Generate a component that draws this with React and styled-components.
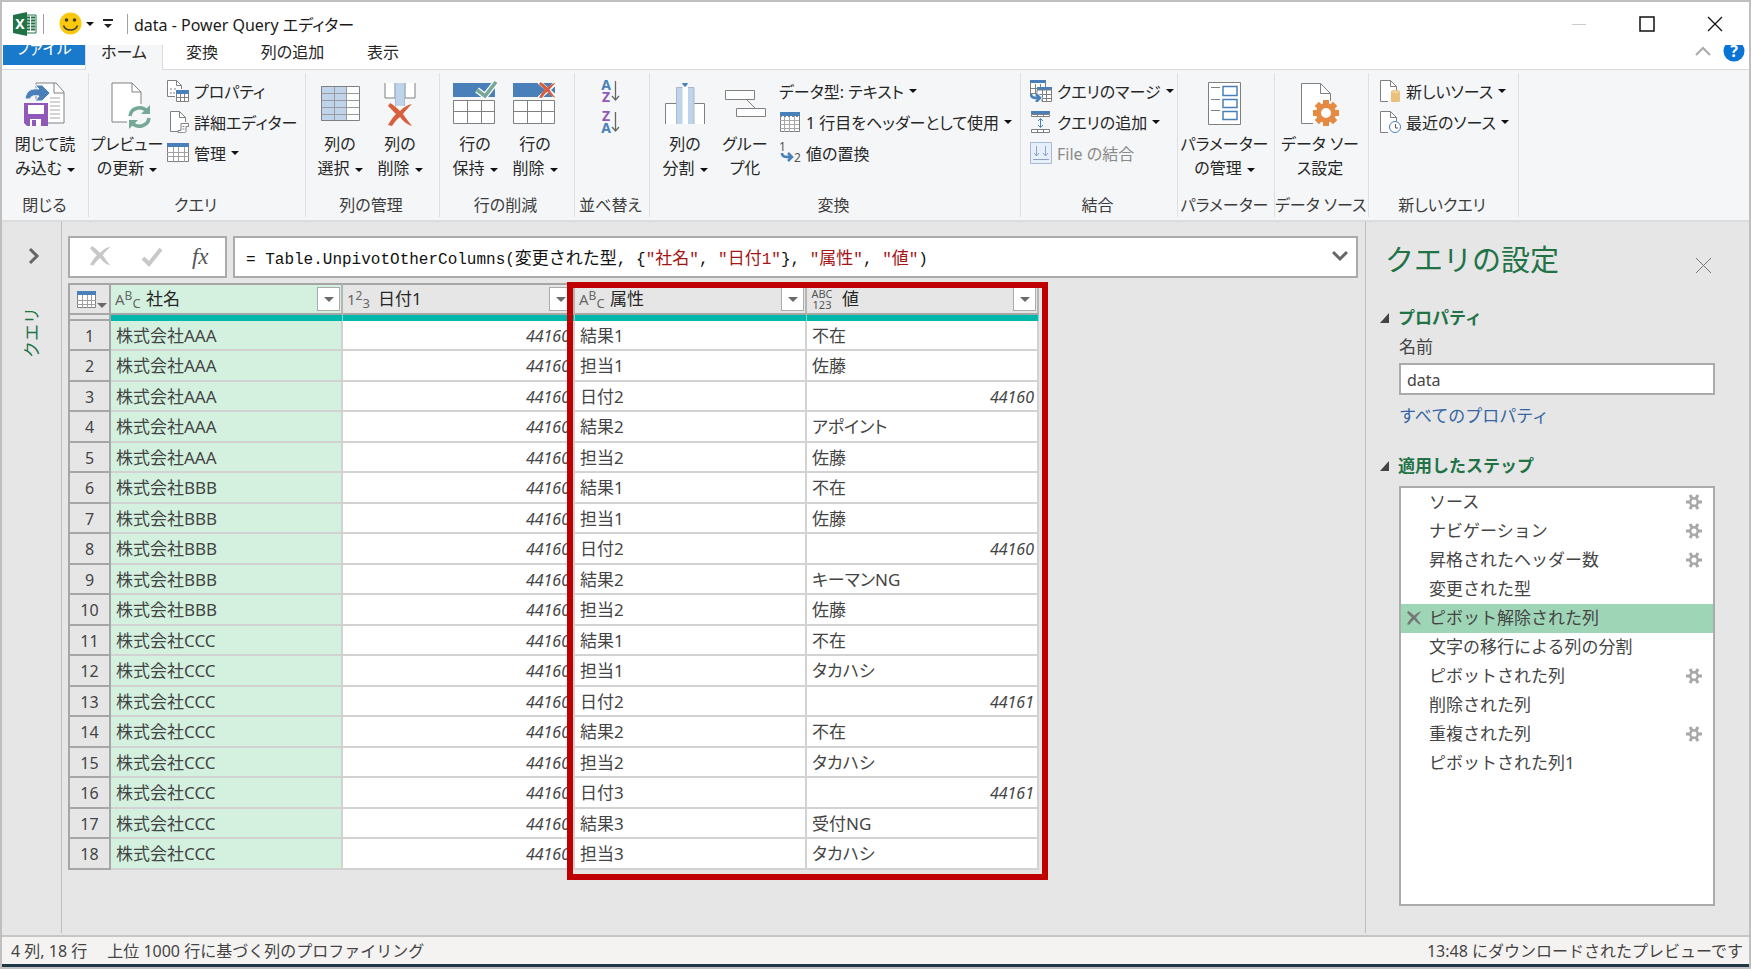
import styled, { createGlobalStyle, css } from "styled-components";

const GlobalStyle = createGlobalStyle`
  * {
    box-sizing: border-box;
  }
  body {
    margin: 0;
    font-family: "Noto Sans", "Noto Sans CJK JP", sans-serif;
    font-size: 17px;
    color: #262626;
  }
  button {
    font: inherit;
    color: inherit;
    background: none;
    border: 0;
    padding: 0;
    cursor: pointer;
  }
  svg {
    display: block;
    flex: none;
  }
`;

const Window = styled.div`
  display: flex;
  flex-direction: column;
  min-height: 100vh;
  border: 2px solid #bfbfbf;
  background: #e6e6e6;
`;

/* title bar */

const TitleBar = styled.header`
  display: flex;
  align-items: center;
  height: 43px;
  padding-left: 11px;
  background: #fff;
`;

const Divider = styled.span`
  width: 1px;
  height: 20px;
  background: #a0a0a0;
`;

const QuickButton = styled.button`
  display: flex;
  align-items: center;
  gap: 4px;
  margin-left: ${(p) => p.$left}px;
`;

const WindowTitle = styled.h1`
  flex: 1;
  margin: 0 0 0 6px;
  font-size: 16px;
  font-weight: 400;
  font-feature-settings: "palt";
  color: #1a1a1a;
`;

const WindowButton = styled.button`
  display: flex;
  align-items: center;
  justify-content: center;
  width: 68px;
  height: 43px;
`;

const Caret = styled.span`
  display: inline-block;
  width: 0;
  height: 0;
  border-left: 4px solid transparent;
  border-right: 4px solid transparent;
  border-top: 4px solid #111;
  vertical-align: middle;
  margin-left: ${(p) => p.$gap || 0}px;
`;

/* ribbon */

const TabRow = styled.nav`
  display: flex;
  align-items: flex-end;
  height: 25px;
  padding-left: 1px;
  overflow: hidden;
  background: linear-gradient(#dadbdc, #dadbdc) bottom / 100% 1px no-repeat #fff;
  font-size: 16px;
  font-feature-settings: "palt";
`;

const Tab = styled.button`
  flex: none;
  width: ${(p) => p.$width || 78}px;
  height: 40px;
  border: 1px solid transparent;
  border-bottom: 0;
  ${(p) =>
    p.$active &&
    css`
      background: #f5f6f7;
      border-color: #dadbdc;
    `}
`;

const FileTab = styled.button`
  width: 82px;
  height: 36px;
  margin-bottom: 5px;
  background: #1979ca;
  color: #fff;
`;

const TabTools = styled.div`
  display: flex;
  align-items: flex-end;
  gap: 12px;
  margin-left: auto;
  padding: 0 4px 8px 0;
`;

const RibbonBar = styled.section`
  display: flex;
  height: 152px;
  padding-left: 2px;
  background: #f5f6f8;
  border-bottom: 2px solid #dcdcdd;
  font-size: 16px;
  font-feature-settings: "palt";
`;

const Group = styled.div`
  display: flex;
  flex-direction: column;
  flex: none;
  width: ${(p) => p.$width}px;
  margin: 3px 0;
  border-right: 1px solid #dfe0e2;
`;

const GroupBody = styled.div`
  display: flex;
  flex: 1;
  padding-top: 2px;
  padding-left: ${(p) => p.$pad || 0}px;
`;

const GroupLabel = styled.div`
  height: 24px;
  padding-right: 3px;
  line-height: 24px;
  text-align: center;
  white-space: nowrap;
  color: #3c3c3c;
`;

const BigButton = styled.button`
  display: flex;
  flex-direction: column;
  align-items: center;
  align-self: flex-start;
  flex: none;
  width: ${(p) => p.$width}px;
  padding-top: 6px;
`;

const BigLine = styled.span`
  display: block;
  line-height: 24px;
  white-space: nowrap;
`;

const BigIcon = styled.span`
  height: 51px;
`;

const SmallList = styled.div`
  display: flex;
  flex-direction: column;
  align-items: flex-start;
  margin-left: ${(p) => p.$left || 0}px;
`;

const SmallButton = styled.button`
  display: flex;
  align-items: center;
  gap: 5px;
  height: 31px;
  white-space: nowrap;
  &:disabled {
    color: #8a8a8a;
  }
`;

/* work area */

const Work = styled.main`
  display: flex;
  flex: 1;
`;

const QueryPane = styled.aside`
  display: flex;
  flex-direction: column;
  align-items: center;
  width: 60px;
  margin-bottom: 2px;
  padding: 25px 0 0 4px;
  border-right: 1px solid #bdbdbd;
`;

const PaneName = styled.span`
  writing-mode: vertical-rl;
  text-orientation: sideways;
  transform: rotate(180deg);
  margin: 42px 6px 0 0;
  color: #217346;
`;

const Center = styled.section`
  flex: 1;
  min-width: 0;
  padding: 14px 7px 0 6px;
`;

const FormulaRow = styled.div`
  display: flex;
  gap: 6px;
  height: 42px;
`;

const FormulaTools = styled.div`
  display: flex;
  align-items: center;
  justify-content: space-around;
  width: 159px;
  padding: 0 2px 0 6px;
  background: #fff;
  border: 2px solid #ababab;
`;

const FxButton = styled.button`
  font-family: "Liberation Serif", serif;
  font-style: italic;
  font-size: 23px;
  color: #555;
`;

const FormulaBox = styled.div`
  display: flex;
  align-items: center;
  flex: 1;
  padding: 0 8px 2px 11px;
  background: #fff;
  border: 2px solid #ababab;
`;

const Formula = styled.code`
  flex: 1;
  font-family: "Liberation Mono", "Noto Sans CJK JP", monospace;
  font-size: 16px;
  white-space: pre;
  color: #111;
`;

const Str = styled.span`
  color: #a31515;
`;

const Jp = styled.span`
  font-size: 17px;
`;

/* data grid */

const GridWrap = styled.div`
  position: relative;
  width: max-content;
  margin-top: 5px;
`;

const Highlight = styled.div`
  position: absolute;
  top: -1px;
  right: -9px;
  bottom: -10px;
  width: 481px;
  border: 6px solid #c00000;
  pointer-events: none;
`;

const Grid = styled.table`
  table-layout: fixed;
  width: 971px;
  border-collapse: separate;
  border-spacing: 0;
  font-feature-settings: "palt";
  color: #444;
`;

const Col = styled.col`
  width: ${(p) => p.$width}px;
`;

const HeadCell = styled.th`
  height: 32px;
  padding: 0 1px 0 4px;
  font-weight: 400;
  background: ${(p) => (p.$selected ? "#d4f1e0" : "#e6e6e6")};
  border-top: 2px solid #a6a6a6;
  border-bottom: 2px solid #a6a6a6;
  border-right: 2px solid #b4b4b4;
`;

const HeadInner = styled.div`
  display: flex;
  align-items: center;
  height: 28px;
`;

const HeadName = styled.span`
  flex: 1;
  margin-left: 9px;
  text-align: left;
  line-height: 24px;
  color: #262626;
`;

const CornerCell = styled.th`
  padding: 0 0 0 7px;
  background: #e6e6e6;
  border: 2px solid #a6a6a6;
`;

const CornerButton = styled.button`
  display: flex;
  align-items: flex-end;
  gap: 1px;
`;

const FilterButton = styled.button`
  display: flex;
  align-items: center;
  justify-content: center;
  width: 23px;
  height: 24px;
  background: #fff;
  border: 1px solid #ababab;
`;

const GreyCaret = styled(Caret)`
  border-left-width: 5px;
  border-right-width: 5px;
  border-top: 5px solid #6a6a6a;
`;

const TypeBadge = styled.span`
  width: 22px;
  font-size: 15px;
  line-height: 20px;
  white-space: nowrap;
  color: #666;
`;

const Raised = styled.span`
  font-size: 12px;
  vertical-align: 5px;
  line-height: 1;
`;

const Lowered = styled.span`
  font-size: 13px;
  vertical-align: -3px;
  line-height: 1;
`;

const StackBadge = styled.span`
  display: flex;
  flex-direction: column;
  width: 22px;
  font-size: 11px;
  line-height: 11px;
  color: #555;
`;

const QualityCell = styled.td`
  height: 6px;
  padding: 0;
  background: #01b8aa;
  border-right: 1px solid #8ad8d2;
`;

const QualityCorner = styled.td`
  padding: 0;
  border: 2px solid #a6a6a6;
  border-top: 0;
`;

const Row = styled.tr`
  height: 30px;
  &:nth-child(even) {
    height: 31px;
  }
`;

const NumCell = styled.th`
  padding: 1px 0 0;
  font-weight: 400;
  font-size: 16px;
  line-height: 24px;
  background: #e6e6e6;
  border: 2px solid #a6a6a6;
  border-top: 0;
`;

const Cell = styled.td`
  padding: 1px 3px 0 5px;
  line-height: 24px;
  white-space: nowrap;
  background: ${(p) => (p.$selected ? "#d4f1e0" : "#fff")};
  border-right: 2px solid #d2d2d2;
  border-bottom: 2px solid #d2d2d2;
  ${(p) =>
    p.$number &&
    css`
      text-align: right;
      font-style: italic;
      font-size: 16px;
    `}
`;

/* settings panel */

const Settings = styled.aside`
  display: flex;
  flex-direction: column;
  width: 384px;
  margin-bottom: 2px;
  padding: 16px 34px 27px 19px;
  border-left: 1px solid #bdbdbd;
`;

const SettingsHead = styled.div`
  display: flex;
  align-items: flex-end;
  justify-content: space-between;
  padding-right: 3px;
`;

const ClosePanel = styled.button`
  margin-bottom: 8px;
`;

const SettingsTitle = styled.h2`
  margin: 0;
  font-size: 29px;
  line-height: 44px;
  font-weight: 400;
  color: #217346;
`;

const Section = styled.h3`
  display: flex;
  align-items: center;
  gap: 9px;
  margin: ${(p) => p.$top}px 0 0 -5px;
  font-size: 17px;
  line-height: 28px;
  font-weight: 700;
  color: #217346;
`;

const Field = styled.div`
  display: flex;
  flex-direction: column;
  align-items: flex-start;
  margin-left: 14px;
`;

const NameLabel = styled.label`
  margin-top: 1px;
  line-height: 28px;
  color: #444;
`;

const NameInput = styled.input`
  width: 100%;
  height: 32px;
  margin-top: 2px;
  padding: 2px 6px 0;
  border: 2px solid #ababab;
  background: #fff;
  font: inherit;
  font-size: 16px;
  color: #444;
`;

const AllLink = styled.a`
  margin-top: 7px;
  line-height: 28px;
  color: #3665a3;
  text-decoration: none;
`;

const Steps = styled.ul`
  flex: 1;
  margin: 6px 0 0 14px;
  padding: 0;
  list-style: none;
  background: #fff;
  border: 2px solid #ababab;
`;

const Step = styled.li`
  display: flex;
  align-items: center;
  height: 29px;
  padding: 0 11px 1px 6px;
  background: ${(p) => (p.$selected ? "#9fd5b7" : "transparent")};
`;

const StepMark = styled.span`
  width: 22px;
`;

const StepName = styled.button`
  flex: 1;
  text-align: left;
  line-height: 24px;
  color: #444;
`;

/* status bar */

const StatusBar = styled.footer`
  display: flex;
  align-items: center;
  height: 32px;
  padding: 0 6px 2px 9px;
  gap: 20px;
  background: #f4f3f2;
  border-top: 2px solid #c6c6c6;
  border-bottom: 3px solid #1f3645;
  font-size: 16px;
  color: #444;
`;

const StatusRight = styled.span`
  margin-left: auto;
`;

/* drawings */

const Svg = ({ w = 22, h = 22, children }) => (
  <svg width={w} height={h} viewBox={`0 0 ${w} ${h}`} fill="none" aria-hidden="true">
    {children}
  </svg>
);

const GREY = "#808080";
const BLUE = "#4a80b9";

const ExcelLogo = () => (
  <Svg w={25} h={24}>
    <path d="M12 3h11v18H12z" fill="#fff" stroke="#217346" />
    <path d="M14 5.500h3M14 8.500h3M14 11.500h3M14 14.500h3M14 17.500h3M18 5.500h4M18 8.500h4M18 11.500h4M18 14.500h4M18 17.500h4" stroke="#217346" strokeWidth="2" />
    <path d="M0 3l14-3v24L0 21z" fill="#217346" />
    <text x="7" y="17" textAnchor="middle" fontSize="14" fontWeight="700" fill="#fff">X</text>
  </Svg>
);

const Smiley = () => (
  <Svg w={23} h={23}>
    <circle cx="11.500" cy="11.500" r="11" fill="#fdc70c" />
    <circle cx="7.500" cy="8" r="1.800" fill="#3d3d3d" />
    <circle cx="15.500" cy="8" r="1.800" fill="#3d3d3d" />
    <path d="M4.500 13.500c2 6 12 6 14 0" stroke="#3d3d3d" strokeWidth="1.500" />
  </Svg>
);

const SaveLoadIcon = () => (
  <Svg w={48} h={48}>
    <path d="M15 18V2h20l8 9v31H26" fill="#fff" stroke={GREY} />
    <path d="M33 2v10h10" stroke={GREY} />
    <path d="M29 17h10M29 21h10M29 25h10M29 29h10M29 33h10M29 37h10" stroke="#a8a8a8" />
    <path d="M4 18c1-8 6-11 14-10l-4-4h7l8 8-8 8h-7l4-5c-5-1-8 0-9 3z" fill={BLUE} stroke="#f5f6f8" />
    <path d="M3 22h24v23H6l-3-3z" fill="#9058b8" />
    <path d="M7 24h16v9H7z" fill="#fff" />
    <path d="M9 38h11v7H9z" fill="#fff" />
    <path d="M11 39h4v6h-4z" fill="#9058b8" />
  </Svg>
);

const Refresh = () => (
  <g stroke="#76a797" strokeWidth="3.500">
    <path d="M22 35c1-8 11-11 17-5" />
    <path d="M41 37c-1 8-11 11-17 5" />
    <path d="M42 24v9h-9z" fill="#76a797" stroke="none" />
    <path d="M21 48v-9h9z" fill="#76a797" stroke="none" />
  </g>
);

const PreviewIcon = () => (
  <Svg w={48} h={48}>
    <g transform="translate(5 0)">
      <path d="M19 41H4V2h20l9 9v12" fill="#fff" stroke={GREY} />
      <path d="M24 2v9h9" stroke={GREY} />
      <Refresh />
    </g>
  </Svg>
);

const PropsIcon = () => (
  <Svg>
    <path d="M8 16.500H.5V.5h9l5 5V9" fill="#fff" stroke={GREY} />
    <path d="M9.500.5v5h5M3 9h2M7 9h2M3 13h2M6 13h2" stroke={GREY} />
    <path d="M9.500 11.500h12v10h-12z" fill="#fff" stroke={GREY} />
    <path d="M9 10h13v4H9z" fill={BLUE} />
    <path d="M13.500 14v8M17.500 14v8M9 17.500h13" stroke={GREY} />
  </Svg>
);

const EditorIcon = () => (
  <Svg>
    <path d="M11 20.500H3.500V.5h9l6 6V11" fill="#fff" stroke={GREY} />
    <path d="M12.500.5v6h6" stroke={GREY} />
    <path d="M14 12.500h7.500v3H19v4.500c0 2-1 1.500-8 1.500v-2h3z" fill="#fff" stroke={GREY} />
    <path d="M15.500 15.500h2M15.500 18h2" stroke={GREY} />
  </Svg>
);

const TableIcon = ({ w = 22, h = 19 }) => (
  <Svg w={w} h={h}>
    <path d={`M.5 .5h${w - 1}v${h - 1}H.5z`} fill="#fff" stroke={GREY} />
    <path d={`M0 0h${w}v4H0z`} fill={BLUE} />
    <path
      d={`M${Math.round(w / 4)}.5 4v${h}M${Math.round(w / 2)}.5 4v${h}M${Math.round((w * 3) / 4)}.5 4v${h}M0 9.500h${w}M0 13.500h${w}`}
      stroke="#a0a0a0"
    />
  </Svg>
);

const ChooseColumnsIcon = () => (
  <Svg w={40} h={48}>
    <path d="M1.500 5.500h38v34h-38z" fill="#fff" />
    <path d="M1 5h26v35H1z" fill="#bfd3ea" />
    <path d="M14.500 5v35M26.500 5v35M1 12.500h39M1 19.500h39M1 26.500h39M1 33.500h39" stroke="#9a9a9a" />
    <path d="M1.500 5.500h38v34h-38z" stroke={GREY} />
  </Svg>
);

const Cross = ({ x = 0, y = 0, s = 1, color = "#d65f3e" }) => (
  <path
    transform={`translate(${x} ${y}) scale(${s})`}
    d="M2 0c4 2 7 5 10 8 4-4 7-6 12-7-4 4-7 7-9 10 2 3 5 7 9 12-6-2-9-5-12-9-4 3-6 6-8 9l-4-1c3-5 5-8 8-11-3-3-5-5-8-8z"
    fill={color}
  />
);

const RemoveColumnsIcon = () => (
  <Svg w={32} h={48}>
    <path d="M1 2v15h10V2M31 2v15H21V2" fill="#fff" stroke={GREY} />
    <path d="M11 2h10v23H11z" fill="#bfd3ea" />
    <path d="M11.500 2v23M20.500 2v23" stroke="#a5bcd6" />
    <Cross x={4} y={22} />
  </Svg>
);

const RowsBase = () => (
  <>
    <path d="M0 2h42v14H0z" fill={BLUE} />
    <path d="M.5 19.500h41v23H.5z" fill="#fff" stroke={GREY} />
    <path d="M14.500 19v24M28.500 19v24M0 30.500h42" stroke={GREY} />
  </>
);

const KeepRowsIcon = () => (
  <Svg w={45} h={48}>
    <RowsBase />
    <path d="M24 9l8 6L43 1" stroke="#fff" strokeWidth="6" />
    <path d="M24 9l8 6L43 1" stroke="#76a797" strokeWidth="3.500" />
  </Svg>
);

const RemoveRowsIcon = () => (
  <Svg w={45} h={48}>
    <RowsBase />
    <path d="M26 1l18 16M44 1L26 17" stroke="#fff" strokeWidth="4" />
    <Cross x={26} y={1} s={0.7} />
  </Svg>
);

const SortIcon = ({ first, second, firstColor, secondColor }) => (
  <Svg w={20} h={24}>
    <text x="5" y="11" textAnchor="middle" fontSize="14" fontWeight="700" fill={firstColor}>{first}</text>
    <text x="5" y="23" textAnchor="middle" fontSize="14" fontWeight="700" fill={secondColor}>{second}</text>
    <path d="M14.500 2v19M11 17l3.500 4 3.500-4" stroke="#666" strokeWidth="1.300" />
  </Svg>
);

const SplitIcon = () => (
  <Svg w={42} h={48}>
    <path d="M1.500 43V22.500h11V43M29.500 43V22.500h11V43" fill="#fff" />
    <path d="M1.500 43V22.500h11M29.500 22.500h11V43" stroke={GREY} />
    <path d="M12.500 6h17v37h-17z" fill="#fff" />
    <path d="M12.500 6h6v37h-6zM24 6h6v37h-6z" fill="#bfd3ea" />
    <path d="M12.500 43V6.500h6M24 6.500h6V43" stroke="#aab9c9" />
    <path d="M18 2h6l-1 2-2 2-2-2z" fill={BLUE} />
  </Svg>
);

const GroupByIcon = () => (
  <Svg w={41} h={48}>
    <path d="M22 19l8 8" stroke={GREY} />
    <path d="M.5 9.500h29v9H.5zM11.500 27.500h29v8h-29z" fill="#fff" stroke={GREY} />
  </Svg>
);

const HeaderRowIcon = () => (
  <Svg>
    <path d="M1.500 1.500h19v19h-19z" fill="#fff" stroke={GREY} />
    <path d="M1 1h20v4H1z" fill={BLUE} />
    <path d="M5.500 5v16M10.500 5v16M15.500 5v16M1 9.500h19M1 13.500h19M1 17.500h19" stroke="#a8a8a8" />
    <path d="M1 5.500h19" stroke={GREY} strokeDasharray="2 2" />
  </Svg>
);

const ReplaceIcon = () => (
  <Svg>
    <text x="0" y="9" fontSize="12" fill="#555">1</text>
    <text x="15" y="20" fontSize="12" fill="#555">2</text>
    <path d="M3 11c0 4 3 4 9 4M9 11l4 4-4 4" stroke={BLUE} strokeWidth="2.500" />
  </Svg>
);

const MergeIcon = () => (
  <Svg>
    <path d="M1 1h15v12H1z" fill="#fff" />
    <path d="M.5 13.500V1M5.500 4v9M10.500 4v3M15.500 3v4M1 8.500h6M0 13.500h7" stroke={GREY} />
    <path d="M0 0h16v3H0zM7 7h15v3H7z" fill={BLUE} />
    <path d="M7 10h14.500v11.500H12V17H7z" fill="#fff" stroke={GREY} />
    <path d="M12.500 10v11M16.500 10v11M8 14.500h14M12 18.500h10" stroke={GREY} />
    <path d="M1 14c0 4 3 4 8 4M6 14l4 4-4 4" stroke="#f5f6f8" strokeWidth="4" />
    <path d="M1 14c0 4 3 4 8 4M6 14l4 4-4 4" stroke={BLUE} strokeWidth="2.500" />
  </Svg>
);

const AppendIcon = () => (
  <Svg>
    <path d="M1.500 3.500h18v2h-18zM1.500 18.500h18v3h-18zM7.500 4v2M13.500 4v2M7.500 18v4M13.500 18v4" fill="#fff" stroke={GREY} />
    <path d="M1 0h19v3H1z" fill={BLUE} />
    <path d="M10.500 8v8M8 10l2.500-2.500L13 10M8 14l2.500 2.500L13 14" stroke={BLUE} />
  </Svg>
);

const CombineIcon = () => (
  <Svg>
    <path d="M.5 .5h21v21H.5z" fill="#e6effa" stroke="#a9b9d2" />
    <path d="M6.500 4v10M4 11l2.500 3L9 11M15.500 4v10M13 11l2.500 3 2.500-3M3 17.500h16" stroke="#8ea3c4" />
  </Svg>
);

const ParamsIcon = () => (
  <Svg w={34} h={48}>
    <path d="M.5 1.500h32v42H.5z" fill="#fff" stroke={GREY} />
    <path d="M3 6.500h9M3 18.500h9M3 29.500h9" stroke={GREY} />
    <path d="M15 5.500h14v9H15zM15 18.500h14v8H15zM15 30.500h14v8H15z" stroke={BLUE} strokeWidth="1.500" />
  </Svg>
);

const teeth = (n, cx, cy, r, w, l, color) =>
  Array.from({ length: n }, (_, i) => (
    <rect
      key={i}
      x={cx - w / 2}
      y={cy - r - l}
      width={w}
      height={l + 2}
      fill={color}
      transform={`rotate(${(360 / n) * i + (n === 6 ? 30 : 0)} ${cx} ${cy})`}
    />
  ));

const SourceSettingsIcon = () => (
  <Svg w={40} h={48}>
    <path d="M13 42.500H1.500v-40h19l10 10V20" fill="#fff" stroke={GREY} />
    <path d="M20.500 2.500v10h10" stroke={GREY} />
    {teeth(8, 26, 32, 8, 6, 5, "#e58a43")}
    <circle cx="26" cy="32" r="7.500" fill="#fff" stroke="#e58a43" strokeWidth="5" />
  </Svg>
);

const NewSourceIcon = () => (
  <Svg>
    <path d="M9 21.500H1.500V.500h10l6 6V10" fill="#fff" stroke={GREY} />
    <path d="M11.500.5v6h6" stroke={GREY} />
    <path d="M12 12v9c0 2 9 2 9 0v-9z" fill="#e9c07c" />
    <ellipse cx="16.500" cy="12" rx="4.500" ry="1.500" fill="#f3d8a6" stroke="#e9c07c" />
  </Svg>
);

const RecentIcon = () => (
  <Svg>
    <path d="M9 21.500H1.500V.500h10l6 6V10" fill="#fff" stroke={GREY} />
    <path d="M11.500.5v6h6" stroke={GREY} />
    <circle cx="16" cy="16" r="5.500" fill="#fff" stroke={BLUE} />
    <path d="M16.500 13v4H19" stroke="#555" />
  </Svg>
);

const StepGear = () => (
  <Svg w={16} h={16}>
    {teeth(6, 8, 8, 4, 3, 4, "#a8a8a8")}
    <circle cx="8" cy="8" r="3.800" fill="#fff" stroke="#a8a8a8" strokeWidth="2.500" />
  </Svg>
);

const Collapse = () => (
  <Svg w={9} h={10}>
    <path d="M9 0v10H0z" fill="#444" />
  </Svg>
);

/* data */

const companies = ["AAA", "BBB", "CCC"];

const rows = [
  [0, 44160, "結果1", "不在"],
  [0, 44160, "担当1", "佐藤"],
  [0, 44160, "日付2", 44160],
  [0, 44160, "結果2", "アポイント"],
  [0, 44160, "担当2", "佐藤"],
  [1, 44160, "結果1", "不在"],
  [1, 44160, "担当1", "佐藤"],
  [1, 44160, "日付2", 44160],
  [1, 44160, "結果2", "キーマンNG"],
  [1, 44160, "担当2", "佐藤"],
  [2, 44160, "結果1", "不在"],
  [2, 44160, "担当1", "タカハシ"],
  [2, 44160, "日付2", 44161],
  [2, 44160, "結果2", "不在"],
  [2, 44160, "担当2", "タカハシ"],
  [2, 44160, "日付3", 44161],
  [2, 44160, "結果3", "受付NG"],
  [2, 44160, "担当3", "タカハシ"],
];

const steps = [
  { name: "ソース", gear: true },
  { name: "ナビゲーション", gear: true },
  { name: "昇格されたヘッダー数", gear: true },
  { name: "変更された型" },
  { name: "ピボット解除された列", selected: true },
  { name: "文字の移行による列の分割" },
  { name: "ピボットされた列", gear: true },
  { name: "削除された列" },
  { name: "重複された列", gear: true },
  { name: "ピボットされた列1" },
];

const Big = ({ icon, lines, menu, width = 60 }) => (
  <BigButton $width={width}>
    <BigIcon>{icon}</BigIcon>
    <BigLine>{lines[0]}</BigLine>
    <BigLine>
      {lines[1]}
      {menu && <Caret $gap={5} />}
    </BigLine>
  </BigButton>
);

const Small = ({ icon, label, menu, disabled }) => (
  <SmallButton disabled={disabled}>
    {icon}
    {label}
    {menu && <Caret />}
  </SmallButton>
);

const RibbonGroup = ({ label, width, pad, children }) => (
  <Group $width={width}>
    <GroupBody $pad={pad}>{children}</GroupBody>
    <GroupLabel>{label}</GroupLabel>
  </Group>
);

const Ribbon = () => (
  <RibbonBar>
    <RibbonGroup label="閉じる" width={85}>
      <Big icon={<SaveLoadIcon />} lines={["閉じて読", "み込む"]} menu width={82} />
    </RibbonGroup>
    <RibbonGroup label="クエリ" width={217} pad={1}>
      <Big icon={<PreviewIcon />} lines={["プレビュー", "の更新"]} menu width={74} />
      <SmallList $left={3}>
        <Small icon={<PropsIcon />} label="プロパティ" />
        <Small icon={<EditorIcon />} label="詳細エディター" />
        <Small icon={<TableIcon />} label="管理" menu />
      </SmallList>
    </RibbonGroup>
    <RibbonGroup label="列の管理" width={134} pad={4}>
      <Big icon={<ChooseColumnsIcon />} lines={["列の", "選択"]} menu />
      <Big icon={<RemoveColumnsIcon />} lines={["列の", "削除"]} menu />
    </RibbonGroup>
    <RibbonGroup label="行の削減" width={135} pad={5}>
      <Big icon={<KeepRowsIcon />} lines={["行の", "保持"]} menu />
      <Big icon={<RemoveRowsIcon />} lines={["行の", "削除"]} menu />
    </RibbonGroup>
    <RibbonGroup label="並べ替え" width={75} pad={26}>
      <SmallList>
        <Small icon={<SortIcon first="A" second="Z" firstColor={BLUE} secondColor="#9058b8" />} />
        <Small icon={<SortIcon first="Z" second="A" firstColor="#9058b8" secondColor={BLUE} />} />
      </SmallList>
    </RibbonGroup>
    <RibbonGroup label="変換" width={371} pad={5}>
      <Big icon={<SplitIcon />} lines={["列の", "分割"]} menu />
      <Big icon={<GroupByIcon />} lines={["グルー", "プ化"]} />
      <SmallList $left={4}>
        <Small label="データ型: テキスト" menu />
        <Small icon={<HeaderRowIcon />} label="1 行目をヘッダーとして使用" menu />
        <Small icon={<ReplaceIcon />} label="値の置換" />
      </SmallList>
    </RibbonGroup>
    <RibbonGroup label="結合" width={157} pad={9}>
      <SmallList>
        <Small icon={<MergeIcon />} label="クエリのマージ" menu />
        <Small icon={<AppendIcon />} label="クエリの追加" menu />
        <Small icon={<CombineIcon />} label="File の結合" disabled />
      </SmallList>
    </RibbonGroup>
    <RibbonGroup label="パラメーター" width={97}>
      <Big icon={<ParamsIcon />} lines={["パラメーター", "の管理"]} menu width={93} />
    </RibbonGroup>
    <RibbonGroup label="データ ソース" width={94}>
      <Big icon={<SourceSettingsIcon />} lines={["データ ソー", "ス設定"]} width={90} />
    </RibbonGroup>
    <RibbonGroup label="新しいクエリ" width={150} pad={10}>
      <SmallList>
        <Small icon={<NewSourceIcon />} label="新しいソース" menu />
        <Small icon={<RecentIcon />} label="最近のソース" menu />
      </SmallList>
    </RibbonGroup>
  </RibbonBar>
);

const TextType = () => (
  <TypeBadge>
    A<Raised>B</Raised>
    <Lowered>C</Lowered>
  </TypeBadge>
);

const NumberType = () => (
  <TypeBadge>
    1<Raised>2</Raised>
    <Lowered>3</Lowered>
  </TypeBadge>
);

const AnyType = () => (
  <StackBadge>
    <span>ABC</span>
    <span>123</span>
  </StackBadge>
);

const ColumnHead = ({ badge, name, selected }) => (
  <HeadCell $selected={selected} scope="col">
    <HeadInner>
      {badge}
      <HeadName>{name}</HeadName>
      <FilterButton aria-label={`${name} filter`}>
        <GreyCaret />
      </FilterButton>
    </HeadInner>
  </HeadCell>
);

const DataGrid = () => (
  <GridWrap>
    <Grid>
      <colgroup>
        <Col $width={43} />
        <Col $width={232} />
        <Col $width={232} />
        <Col $width={232} />
        <Col $width={232} />
      </colgroup>
      <thead>
        <tr>
          <CornerCell>
            <CornerButton aria-label="table menu">
              <TableIcon w={19} h={17} />
              <GreyCaret as="span" />
            </CornerButton>
          </CornerCell>
          <ColumnHead badge={<TextType />} name="社名" selected />
          <ColumnHead badge={<NumberType />} name="日付1" />
          <ColumnHead badge={<TextType />} name="属性" />
          <ColumnHead badge={<AnyType />} name="値" />
        </tr>
        <tr>
          <QualityCorner />
          <QualityCell />
          <QualityCell />
          <QualityCell />
          <QualityCell />
        </tr>
      </thead>
      <tbody>
        {rows.map(([company, date, attribute, value], i) => (
          <Row key={i}>
            <NumCell scope="row">{i + 1}</NumCell>
            <Cell $selected>株式会社{companies[company]}</Cell>
            <Cell $number>{date}</Cell>
            <Cell>{attribute}</Cell>
            <Cell $number={typeof value === "number"}>{value}</Cell>
          </Row>
        ))}
      </tbody>
    </Grid>
    <Highlight />
  </GridWrap>
);

const SettingsPanel = () => (
  <Settings>
    <SettingsHead>
      <SettingsTitle>クエリの設定</SettingsTitle>
      <ClosePanel aria-label="close panel">
        <Svg w={17} h={17}>
          <path d="M1 1l15 15M16 1L1 16" stroke="#777" />
        </Svg>
      </ClosePanel>
    </SettingsHead>
    <Section $top={22}>
      <Collapse />
      プロパティ
    </Section>
    <Field>
      <NameLabel htmlFor="query-name">名前</NameLabel>
      <NameInput id="query-name" defaultValue="data" />
      <AllLink href="#properties">すべてのプロパティ</AllLink>
    </Field>
    <Section $top={22}>
      <Collapse />
      適用したステップ
    </Section>
    <Steps>
      {steps.map((step) => (
        <Step key={step.name} $selected={step.selected}>
          <StepMark>
            {step.selected && (
              <Svg w={16} h={16}>
                <Cross s={0.6} y={1} color="#777" />
              </Svg>
            )}
          </StepMark>
          <StepName>{step.name}</StepName>
          {step.gear && (
            <button aria-label={`${step.name} settings`}>
              <StepGear />
            </button>
          )}
        </Step>
      ))}
    </Steps>
  </Settings>
);

const App = () => {
  return (
    <Window>
      <GlobalStyle />
      <TitleBar>
        <ExcelLogo />
        <QuickButton as="span" $left={5}>
          <Divider />
        </QuickButton>
        <QuickButton $left={15} aria-label="feedback">
          <Smiley />
          <Caret />
        </QuickButton>
        <QuickButton $left={9} aria-label="customize toolbar">
          <Svg w={10} h={10}>
            <path d="M0 1h10" stroke="#222" strokeWidth="2" />
            <path d="M1 5h8l-4 4z" fill="#222" />
          </Svg>
        </QuickButton>
        <QuickButton as="span" $left={14}>
          <Divider />
        </QuickButton>
        <WindowTitle>data - Power Query エディター</WindowTitle>
        <WindowButton aria-label="minimize">
          <Svg w={16} h={16}>
            <path d="M1 8.500h14" stroke="#ccc" />
          </Svg>
        </WindowButton>
        <WindowButton aria-label="maximize">
          <Svg w={16} h={16}>
            <path d="M1 1h14v14H1z" stroke="#111" strokeWidth="1.500" />
          </Svg>
        </WindowButton>
        <WindowButton aria-label="close">
          <Svg w={16} h={16}>
            <path d="M1 1l14 14M15 1L1 15" stroke="#111" strokeWidth="1.300" />
          </Svg>
        </WindowButton>
      </TitleBar>
      <TabRow>
        <FileTab>ファイル</FileTab>
        <Tab $active>ホーム</Tab>
        <Tab>変換</Tab>
        <Tab $width={103}>列の追加</Tab>
        <Tab>表示</Tab>
        <TabTools>
          <button aria-label="collapse ribbon">
            <Svg w={16} h={16}>
              <path d="M1 9l7-7 7 7" stroke="#aaa" strokeWidth="2" />
            </Svg>
          </button>
          <button aria-label="help">
            <Svg>
              <circle cx="11" cy="11" r="10.500" fill="#0a74d4" />
              <text x="11" y="17" textAnchor="middle" fontSize="16" fontWeight="700" fill="#fff">?</text>
            </Svg>
          </button>
        </TabTools>
      </TabRow>
      <Ribbon />
      <Work>
        <QueryPane>
          <button aria-label="expand queries">
            <Svg w={12} h={18}>
              <path d="M2 2l7 7-7 7" stroke="#666" strokeWidth="3" />
            </Svg>
          </button>
          <PaneName>クエリ</PaneName>
        </QueryPane>
        <Center>
          <FormulaRow>
            <FormulaTools>
              <button aria-label="cancel">
                <Svg w={22} h={22}>
                  <Cross s={0.85} color="#c8c8c8" />
                </Svg>
              </button>
              <button aria-label="commit">
                <Svg w={22} h={22}>
                  <path d="M2 12l6 6L20 3" stroke="#c8c8c8" strokeWidth="4" />
                </Svg>
              </button>
              <FxButton aria-label="add step">fx</FxButton>
            </FormulaTools>
            <FormulaBox>
              <Formula>
                = Table.UnpivotOtherColumns(<Jp>変更された型</Jp>, {"{"}
                <Str>"<Jp>社名</Jp>"</Str>, <Str>"<Jp>日付</Jp>1"</Str>
                {"}"}, <Str>"<Jp>属性</Jp>"</Str>, <Str>"<Jp>値</Jp>"</Str>)
              </Formula>
              <button aria-label="expand formula">
                <Svg w={16} h={12}>
                  <path d="M1 2l7 7 7-7" stroke="#666" strokeWidth="3" />
                </Svg>
              </button>
            </FormulaBox>
          </FormulaRow>
          <DataGrid />
        </Center>
        <SettingsPanel />
      </Work>
      <StatusBar>
        <span>4 列, 18 行</span>
        <span>上位 1000 行に基づく列のプロファイリング</span>
        <StatusRight>13:48 にダウンロードされたプレビューです</StatusRight>
      </StatusBar>
    </Window>
  );
};

export default App;
